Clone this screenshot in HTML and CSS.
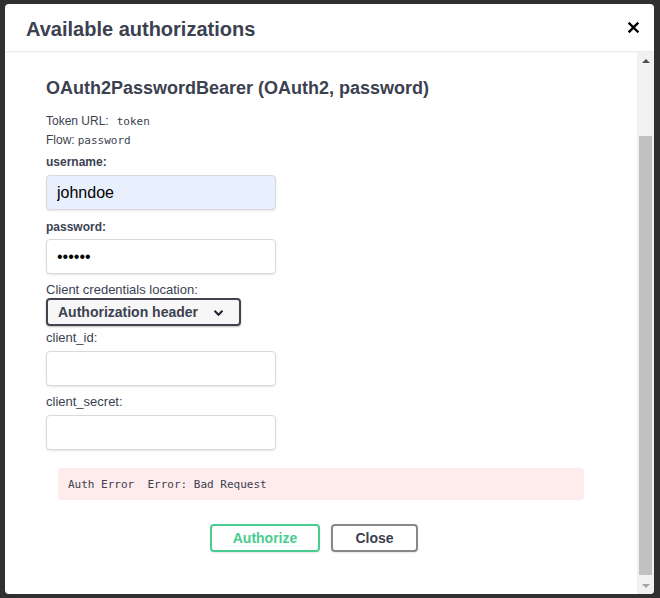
FILE: index.html
```html
<!DOCTYPE html>
<html lang="en">
<head>
<meta charset="utf-8">
<title>Available authorizations</title>
<link rel="stylesheet" href="styles.css">
</head>
<body>
<div class="modal">
  <div class="modal-header">
    <h3 class="modal-title">Available authorizations</h3>
    <button class="close-btn" type="button" aria-label="Close">
      <svg width="11" height="11" viewBox="0 0 11 11"><path d="M1.5 1.5L9.5 9.5M9.5 1.5L1.5 9.5" stroke="#000" stroke-width="2.4" stroke-linecap="square" fill="none"/></svg>
    </button>
  </div>
  <div class="modal-body">
    <div class="auth-content">
      <h4 class="scheme-title">OAuth2PasswordBearer (OAuth2, password)</h4>
      <p class="meta meta-first">Token URL:<code class="code-wide">token</code></p>
      <p class="meta">Flow:<code class="code-narrow">password</code></p>

      <label class="field-label strong label-username">username:</label>
      <input class="text-input autofilled input-username" type="text" value="johndoe">

      <label class="field-label strong label-password">password:</label>
      <input class="text-input input-password" type="password" value="secret">

      <label class="field-label label-location">Client credentials location:</label>
      <div class="select-box">
        <span>Authorization header</span>
        <svg width="11" height="8" viewBox="0 0 11 8"><path d="M1.5 1.8L5.5 5.8L9.5 1.8" stroke="#1f2330" stroke-width="2" fill="none"/></svg>
      </div>

      <label class="field-label label-client-id">client_id:</label>
      <input class="text-input input-client" type="text" value="">

      <label class="field-label label-client-secret">client_secret:</label>
      <input class="text-input input-client" type="text" value="">

      <div class="error-box"><span class="err-text">Auth Error  Error: Bad Request</span></div>

      <div class="btn-row">
        <button class="btn btn-authorize" type="button">Authorize</button>
        <button class="btn btn-close" type="button">Close</button>
      </div>
    </div>
    <div class="scrollbar">
      <div class="sb-btn"><span class="arrow-up"></span></div>
      <div class="sb-gap"></div>
      <div class="sb-thumb"></div>
      <div class="sb-btn sb-btn-down"><span class="arrow-down"></span></div>
    </div>
  </div>
</div>
</body>
</html>
```
FILE: styles.css
```css
* { box-sizing: border-box; }

html, body {
  margin: 0;
  height: 100%;
}

body {
  background: #303030;
  padding: 4px 6px 4px 5px;
  font-family: "Liberation Sans", Arial, sans-serif;
  color: #3b4151;
  overflow: hidden;
}

.modal {
  width: 649px;
  height: 590px;
  background: #fff;
  border-radius: 4px;
  display: flex;
  flex-direction: column;
  overflow: hidden;
}

.modal-header {
  height: 48px;
  flex: none;
  display: flex;
  align-items: center;
  justify-content: space-between;
  padding: 0 15px 0 21px;
  border-bottom: 1px solid #ebebeb;
  box-shadow: 0 1px 2px rgba(0, 0, 0, 0.04);
}

.modal-title {
  margin: 2px 0 0;
  font-size: 20px;
  font-weight: 700;
  color: #3b4151;
  line-height: 24px;
}

.close-btn {
  border: 0;
  background: none;
  padding: 0;
  width: 11px;
  height: 11px;
  display: flex;
  margin-top: -1px;
}

.modal-body {
  flex: 1;
  display: flex;
  min-height: 0;
}

.auth-content {
  flex: 1;
  display: flex;
  flex-direction: column;
  align-items: flex-start;
  padding: 25px 0 0 41px;
  overflow: hidden;
}

.scheme-title {
  margin: 0;
  font-size: 18px;
  line-height: 22px;
  font-weight: 700;
  color: #3b4151;
}

.meta {
  margin: 0;
  font-size: 12px;
  line-height: 19px;
  color: #3b4151;
}

.meta-first { margin-top: 13px; }

code {
  font-family: "DejaVu Sans Mono", "Liberation Mono", monospace;
  font-size: 11px;
  color: #3b4151;
}

.code-wide { margin-left: 8px; }
.code-narrow { margin-left: 3px; }

.field-label {
  display: block;
  font-size: 13px;
  line-height: 15px;
  color: #3b4151;
}

.field-label.strong {
  font-size: 12px;
  line-height: 19px;
  font-weight: 700;
}

.label-username { margin-top: 3px; }
.label-password { margin-top: 8px; }
.label-location { margin-top: 8px; }
.label-client-id { margin-top: 4px; }
.label-client-secret { margin-top: 8px; }

.text-input {
  display: block;
  width: 230px;
  height: 35px;
  padding: 0 10px;
  border: 1px solid #d9d9d9;
  border-radius: 4px;
  background: #fff;
  box-shadow: 0 1px 2px rgba(0, 0, 0, 0.1);
  font-family: "Liberation Sans", Arial, sans-serif;
  font-size: 16px;
  color: #000;
  outline: none;
}

.autofilled { background: #e8f0fe; }

.input-username { margin-top: 3px; }
.input-password { margin-top: 2px; }
.input-client { margin-top: 6px; }

.select-box {
  margin-top: 1px;
  width: 195px;
  height: 28px;
  border: 2px solid #41444e;
  border-radius: 4px;
  background: #f7f7f7;
  box-shadow: 0 1px 2px rgba(0, 0, 0, 0.25);
  display: flex;
  align-items: center;
  padding: 0 0 0 10px;
  font-size: 14px;
  font-weight: 700;
  color: #3b4151;
  gap: 15px;
}

.select-box svg { flex: none; margin-top: 1px; }

.error-box {
  margin: 18px 0 0 12px;
  width: 526px;
  height: 32px;
  border-radius: 4px;
  background: #feebeb;
  display: flex;
  align-items: center;
  padding: 0 10px;
}

.err-text {
  font-family: "DejaVu Sans Mono", "Liberation Mono", monospace;
  font-size: 11px;
  white-space: pre;
  color: #3b4151;
}

.btn-row {
  align-self: stretch;
  margin: 24px 0 0 -41px;
  display: flex;
  justify-content: center;
  gap: 11px;
  padding-right: 14px;
}

.btn {
  height: 28px;
  border-radius: 4px;
  background: transparent;
  font-family: "Liberation Sans", Arial, sans-serif;
  font-size: 14px;
  font-weight: 700;
  padding: 0;
  box-shadow: 0 1px 2px rgba(0, 0, 0, 0.1);
}

.btn-authorize {
  width: 110px;
  border: 2px solid #49cc90;
  color: #49cc90;
}

.btn-close {
  width: 87px;
  border: 2px solid #888;
  color: #3b4151;
}

.scrollbar {
  width: 17px;
  flex: none;
  background: #f1f1f1;
  display: flex;
  flex-direction: column;
}

.sb-btn {
  height: 17px;
  flex: none;
  display: flex;
  align-items: center;
  justify-content: center;
}

.sb-gap { height: 67px; flex: none; }

.sb-thumb {
  flex: 1;
  margin: 0 2px 2px;
  background: #c1c1c1;
}

.arrow-up {
  width: 0;
  height: 0;
  border-left: 4px solid transparent;
  border-right: 4px solid transparent;
  border-bottom: 4px solid #505050;
}

.arrow-down {
  width: 0;
  height: 0;
  border-left: 4px solid transparent;
  border-right: 4px solid transparent;
  border-top: 4px solid #a3a3a3;
}
```
